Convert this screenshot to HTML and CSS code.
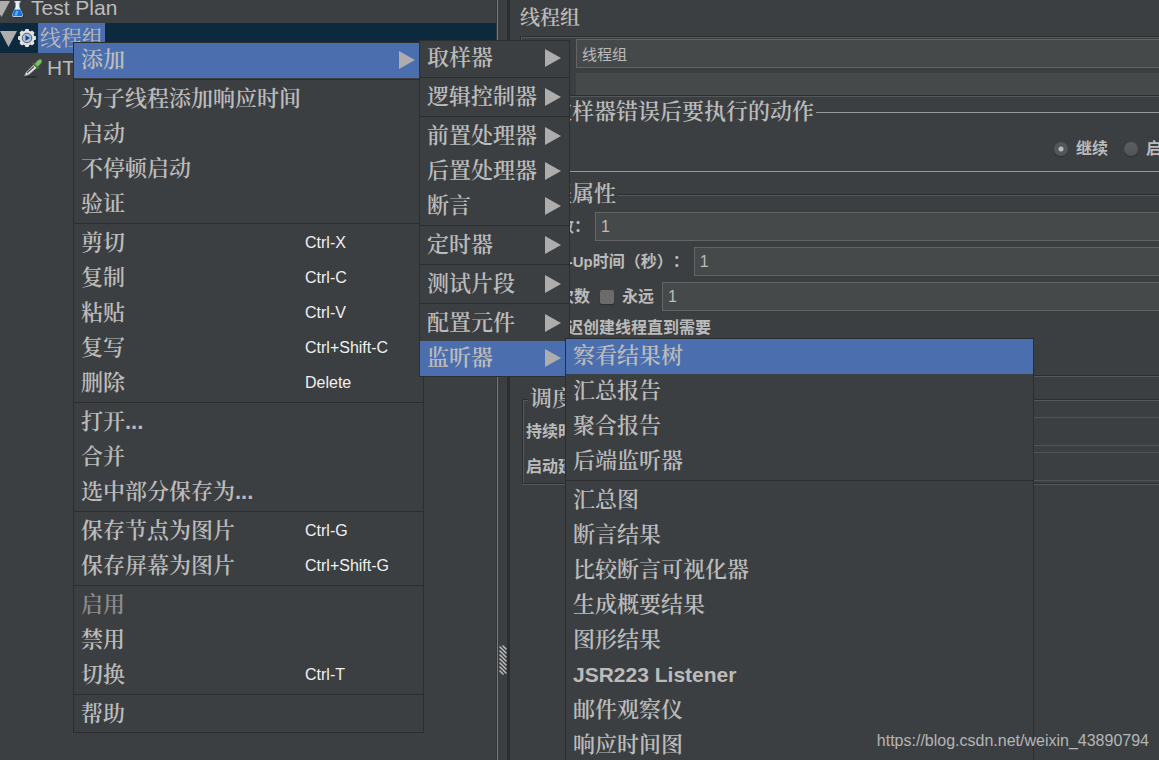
FILE: index.html
```html
<!DOCTYPE html>
<html lang="zh-CN">
<head>
<meta charset="utf-8">
<title>线程组</title>
<link rel="stylesheet" href="styles.css">
</head>
<body>
<div class="app">
  <nav class="tree">
    <div class="node root">
      <svg class="toggle" viewBox="0 0 17 17"><path d="M0 1H17L8.500 17Z" fill="#adadad"/></svg>
      <svg class="icon flask" viewBox="0 0 14 18"><ellipse cx="8" cy="16.500" rx="6" ry="1.500" fill="#2b2d2f"/><path d="M4.500 1H10.500V2.500H9.500V7L12.500 13.500Q13.500 17 11 17H4Q1.500 17 2.500 13.500L5.500 7V2.500H4.500Z" fill="#dce9f5"/><path d="M4.500 9.500H10.500L12.300 14Q12.800 16.200 11 16.200H4Q2.200 16.200 2.700 14Z" fill="#1674d8"/><path d="M6 11H8.500L7 15.500H4.500Z" fill="#5aaefc"/><path d="M6.500 3H7.500V8L6 10Z" fill="#fff"/></svg>
      <span class="name">Test Plan</span>
    </div>
    <div class="node current">
      <svg class="toggle" viewBox="0 0 17 17"><path d="M0 1H17L8.500 17Z" fill="#adadad"/></svg>
      <svg class="icon gear" viewBox="0 0 20 20"><g fill="#e2e2e2"><rect x="8" y="1" width="4" height="18" rx="1"/><rect x="8" y="1" width="4" height="18" rx="1" transform="rotate(45 10 10)"/><rect x="8" y="1" width="4" height="18" rx="1" transform="rotate(90 10 10)"/><rect x="8" y="1" width="4" height="18" rx="1" transform="rotate(135 10 10)"/><circle cx="10" cy="10" r="7.600"/></g><circle cx="10" cy="10" r="4.800" fill="#a9c3e2" stroke="#59616b"/><path d="M8.500 7.200L13 10 8.500 12.800Z" fill="#1d4377"/></svg>
      <span class="name selected">线程组</span>
    </div>
    <div class="node leaf">
      <svg class="icon" viewBox="0 0 20 20"><ellipse cx="8" cy="19" rx="7" ry="1" fill="#2b2d2f"/><path d="M1.500 18L3 14.500 11 6.500 14 9.500 6 16.500Z" fill="#e8e8e8" stroke="#8a8a8a" stroke-width=".7"/><path d="M4 15L11 8.500" stroke="#555" stroke-width="1.200"/><path d="M10 5L15.500 10.500" stroke="#3c7a32" stroke-width="2"/><path d="M11.500 6L14.500 2.500Q17 .5 18.500 1.500 19.500 3.500 18 5.500L14.500 9Z" fill="#7cbf68" stroke="#347529" stroke-width=".6"/></svg>
      <span class="name">HTTP请求</span>
    </div>
  </nav>
  <div class="divider">
    <svg class="grip" viewBox="0 0 8 32"><path d="M4 2L7 5M1 3L7 9M1 7L7 13M1 11L7 17M1 15L7 21M1 19L7 25M1 23L7 29M1 27L4 30" fill="none" stroke="#bdbdbd" stroke-width="1.500" stroke-linecap="round"/></svg>
  </div>
  <main class="panel">
    <h1 class="title">线程组</h1>
    <section class="box heading">
      <div class="row"><label for="name">名称：</label><input class="field" id="name" type="text" value="线程组"></div>
      <div class="row comment"><label for="note">注释：</label><input class="plain" id="note" type="text"></div>
    </section>
    <fieldset class="action">
      <legend>在取样器错误后要执行的动作</legend>
      <div class="choices">
        <label class="choice"><input type="radio" name="action" checked><span>继续</span></label>
        <label class="choice"><input type="radio" name="action"><span>启动下一进程循环</span></label>
      </div>
    </fieldset>
    <fieldset class="box properties">
      <legend>线程属性</legend>
      <div class="rows">
        <div class="row"><label for="threads">线程数：</label><input class="field" id="threads" type="text" value="1"></div>
        <div class="row"><label for="ramp"><span class="word">Ramp-Up</span>时间（秒）：</label><input class="field" id="ramp" type="text" value="1"></div>
        <div class="row loop"><label for="loops">循环次数</label><label class="forever"><input type="checkbox"><span>永远</span></label><input class="field" id="loops" type="text" value="1"></div>
        <label class="tick"><input type="checkbox"><span>延迟创建线程直到需要</span></label>
        <label class="tick"><input type="checkbox"><span>调度器</span></label>
      </div>
    </fieldset>
    <fieldset class="box scheduler">
      <legend>调度器配置</legend>
      <div class="rows">
        <div class="row"><label for="duration">持续时间（秒）</label><input class="field" id="duration" type="text" disabled></div>
        <div class="row"><label for="delay">启动延迟（秒）</label><input class="field" id="delay" type="text" disabled></div>
      </div>
    </fieldset>
  </main>

  <div class="menu main-menu" role="menu">
    <button class="item active">添加<i class="arrow"></i></button>
    <hr>
    <button class="item">为子线程添加响应时间</button>
    <button class="item">启动</button>
    <button class="item">不停顿启动</button>
    <button class="item">验证</button>
    <hr>
    <button class="item">剪切<kbd>Ctrl-X</kbd></button>
    <button class="item">复制<kbd>Ctrl-C</kbd></button>
    <button class="item">粘贴<kbd>Ctrl-V</kbd></button>
    <button class="item">复写<kbd>Ctrl+Shift-C</kbd></button>
    <button class="item">删除<kbd>Delete</kbd></button>
    <hr>
    <button class="item">打开...</button>
    <button class="item">合并</button>
    <button class="item">选中部分保存为...</button>
    <hr>
    <button class="item">保存节点为图片<kbd>Ctrl-G</kbd></button>
    <button class="item">保存屏幕为图片<kbd>Ctrl+Shift-G</kbd></button>
    <hr>
    <button class="item" disabled>启用</button>
    <button class="item">禁用</button>
    <button class="item">切换<kbd>Ctrl-T</kbd></button>
    <hr>
    <button class="item">帮助</button>
  </div>

  <div class="menu add-menu" role="menu">
    <button class="item">取样器<i class="arrow"></i></button>
    <hr>
    <button class="item">逻辑控制器<i class="arrow"></i></button>
    <hr>
    <button class="item">前置处理器<i class="arrow"></i></button>
    <button class="item">后置处理器<i class="arrow"></i></button>
    <button class="item">断言<i class="arrow"></i></button>
    <hr>
    <button class="item">定时器<i class="arrow"></i></button>
    <hr>
    <button class="item">测试片段<i class="arrow"></i></button>
    <hr>
    <button class="item">配置元件<i class="arrow"></i></button>
    <button class="item active">监听器<i class="arrow"></i></button>
  </div>

  <div class="menu listener-menu" role="menu">
    <button class="item active">察看结果树</button>
    <button class="item">汇总报告</button>
    <button class="item">聚合报告</button>
    <button class="item">后端监听器</button>
    <hr>
    <button class="item">汇总图</button>
    <button class="item">断言结果</button>
    <button class="item">比较断言可视化器</button>
    <button class="item">生成概要结果</button>
    <button class="item">图形结果</button>
    <button class="item latin">JSR223 Listener</button>
    <button class="item">邮件观察仪</button>
    <button class="item">响应时间图</button>
  </div>

  <div class="watermark">https://blog.csdn.net/weixin_43890794</div>
</div>
</body>
</html>
```

FILE: styles.css
```css
:root {
  --bg: #3c3f41;
  --text: #bbbbbb;
  --blue: #4b6eaf;
  --dark: #2b2d2f;
  --light: #555859;
  --field: #45494a;
  --edge: #646464;
  --serif: "Liberation Sans", "Noto Serif CJK SC", "Noto Sans CJK SC", sans-serif;
  --sans: "Liberation Sans", "Noto Sans CJK SC", sans-serif;
}

* { box-sizing: border-box; }

body {
  margin: 0;
  background: var(--bg);
  color: var(--text);
  font: 16px/22px var(--sans);
  text-spacing-trim: space-all;
}

.app {
  position: relative;
  display: flex;
  height: 100vh;
  overflow: hidden;
  white-space: nowrap;
}

/* Test tree */
.tree {
  flex: 0 0 496px;
  margin-top: -7px;
  overflow: hidden;
}
.node {
  display: flex;
  align-items: center;
  height: 30px;
  font-family: var(--serif);
  font-size: 21px;
  line-height: 30px;
}
.root { margin-left: -7px; }
.leaf { padding-left: 23px; }
.current { background: #0d293e; }
.toggle { flex: none; width: 17px; height: 17px; }
.icon { flex: none; width: 20px; height: 20px; }
.flask { width: 14px; height: 18px; margin: 2px 4px 0 0; }
.name { padding: 0 2px; }
.root .name { padding-left: 3px; }
.leaf .name { padding-left: 4px; }
.selected {
  margin-left: 1px;
  background: var(--blue);
}

.divider {
  display: flex;
  align-items: flex-end;
  flex: 0 0 14px;
  padding: 0 0 84px 2px;
  border-left: 1px solid #333638;
  border-right: 3px solid var(--dark);
  box-shadow: inset 1px 0 #777a7b;
}
.grip { flex: none; width: 8px; height: 32px; }

/* Settings panel */
.panel {
  flex: 1;
  min-width: 0;
  padding-left: 10px;
}
.title {
  margin: 0;
  height: 36px;
  font-family: var(--serif);
  font-size: 20px;
  font-weight: 600;
  line-height: 36px;
}
.box {
  border: 1px solid var(--dark);
  border-right: 0;
  box-shadow: inset 1px 1px var(--light), 0 1px var(--light);
}
.heading { padding: 2px 0 0 5px; }
.row {
  display: flex;
  align-items: center;
  gap: 5px;
}
.row label { font-weight: 600; }
.word { font-size: 15px; }
.comment { margin-top: 5px; }
.field,
.plain {
  flex: 1;
  min-width: 0;
  height: 29px;
  padding: 0 5px;
  border: 1px solid var(--edge);
  border-right: 0;
  background: var(--field);
  color: var(--text);
  font: inherit;
}
.plain { height: 22px; border: 0; }
.field:disabled { border-color: #515354; background: var(--bg); }
.heading .field { font-size: 15px; }
.heading .row { gap: 2px; }

fieldset { margin: 0; padding: 0; min-width: 0; }
legend {
  margin-left: 5px;
  padding: 0 2px;
  background: var(--bg);
  font-family: var(--serif);
  font-size: 22px;
  font-weight: 600;
  line-height: 30px;
}
.action {
  margin-top: 1px;
  border: 1px solid #979797;
  border-right: 0;
}
.choices {
  display: flex;
  gap: 16px;
  height: 44px;
  padding-left: 533px;
}
.choice,
.forever,
.tick {
  display: flex;
  align-items: center;
  gap: 8px;
  font-weight: 600;
}
.properties { margin-top: 7px; }
.rows {
  display: flex;
  flex-direction: column;
  gap: 6px;
  padding: 3px 0 8px 5px;
}
.loop { gap: 8px; }
.forever { margin-left: 2px; }
.tick { padding-left: 3px; }
.scheduler { margin: 8px 0 0 2px; }
.scheduler .rows { padding: 3px 0 2px 3px; }

input[type="radio"],
input[type="checkbox"] {
  appearance: none;
  flex: none;
  width: 14px;
  height: 14px;
  margin: 0;
  box-shadow: 0 1px 1px 0 #2b2e2f;
}
input[type="checkbox"] { border-radius: 2px; background: #6b6b6b; }
input[type="radio"] {
  border-radius: 50%;
  background: linear-gradient(#5c5f61, #515456);
}
input[type="radio"]:checked { background: radial-gradient(circle, #bbbbbb 2px, #53575a 3px); }

/* Popup menus */
.menu {
  position: absolute;
  display: flex;
  flex-direction: column;
  border: 1px solid var(--dark);
  background: var(--bg);
}
.main-menu { left: 73px; top: 42px; width: 351px; }
.add-menu { left: 419px; top: 40px; width: 151px; }
.listener-menu { left: 565px; top: 338px; width: 469px; }
.menu hr {
  width: 100%;
  height: 4px;
  margin: 0;
  border: 0;
  background: linear-gradient(var(--dark), var(--dark)) 0 1px / 100% 1px no-repeat;
}
.item {
  display: flex;
  align-items: center;
  justify-content: space-between;
  height: 35px;
  padding: 0 8px 1px 7px;
  border: 0;
  background: none;
  color: var(--text);
  font: 600 22px/34px var(--serif);
  text-align: left;
}
.item:disabled { color: #8c8c8c; }
.latin { font-size: 21px; }
.active { background: var(--blue); }
.item kbd {
  width: 110px;
  color: #f0f0f0;
  font: 16px/34px var(--sans);
}
.arrow {
  width: 16px;
  height: 18px;
  background: #adadad;
  clip-path: polygon(0 0, 100% 50%, 0 100%);
}

.watermark {
  position: absolute;
  right: 10px;
  bottom: 8px;
  color: #b4b5b6;
}
```
